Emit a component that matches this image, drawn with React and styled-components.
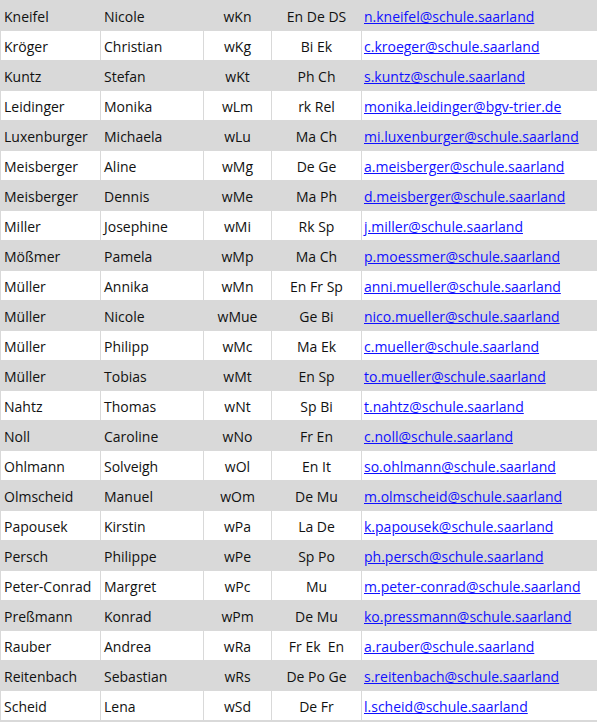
import React from 'react'
import styled, { createGlobalStyle } from 'styled-components'

const teachers = [
  ['Kneifel', 'Nicole', 'wKn', 'En De DS', 'n.kneifel@schule.saarland'],
  ['Kröger', 'Christian', 'wKg', 'Bi Ek', 'c.kroeger@schule.saarland'],
  ['Kuntz', 'Stefan', 'wKt', 'Ph Ch', 's.kuntz@schule.saarland'],
  ['Leidinger', 'Monika', 'wLm', 'rk Rel', 'monika.leidinger@bgv-trier.de'],
  ['Luxenburger', 'Michaela', 'wLu', 'Ma Ch', 'mi.luxenburger@schule.saarland'],
  ['Meisberger', 'Aline', 'wMg', 'De Ge', 'a.meisberger@schule.saarland'],
  ['Meisberger', 'Dennis', 'wMe', 'Ma Ph', 'd.meisberger@schule.saarland'],
  ['Miller', 'Josephine', 'wMi', 'Rk Sp', 'j.miller@schule.saarland'],
  ['Mößmer', 'Pamela', 'wMp', 'Ma Ch', 'p.moessmer@schule.saarland'],
  ['Müller', 'Annika', 'wMn', 'En Fr Sp', 'anni.mueller@schule.saarland'],
  ['Müller', 'Nicole', 'wMue', 'Ge Bi', 'nico.mueller@schule.saarland'],
  ['Müller', 'Philipp', 'wMc', 'Ma Ek', 'c.mueller@schule.saarland'],
  ['Müller', 'Tobias', 'wMt', 'En Sp', 'to.mueller@schule.saarland'],
  ['Nahtz', 'Thomas', 'wNt', 'Sp Bi', 't.nahtz@schule.saarland'],
  ['Noll', 'Caroline', 'wNo', 'Fr En', 'c.noll@schule.saarland'],
  ['Ohlmann', 'Solveigh', 'wOl', 'En It', 'so.ohlmann@schule.saarland'],
  ['Olmscheid', 'Manuel', 'wOm', 'De Mu', 'm.olmscheid@schule.saarland'],
  ['Papousek', 'Kirstin', 'wPa', 'La De', 'k.papousek@schule.saarland'],
  ['Persch', 'Philippe', 'wPe', 'Sp Po', 'ph.persch@schule.saarland'],
  ['Peter-Conrad', 'Margret', 'wPc', 'Mu', 'm.peter-conrad@schule.saarland'],
  ['Preßmann', 'Konrad', 'wPm', 'De Mu', 'ko.pressmann@schule.saarland'],
  ['Rauber', 'Andrea', 'wRa', 'Fr Ek  En', 'a.rauber@schule.saarland'],
  ['Reitenbach', 'Sebastian', 'wRs', 'De Po Ge', 's.reitenbach@schule.saarland'],
  ['Scheid', 'Lena', 'wSd', 'De Fr', 'l.scheid@schule.saarland'],
]

const GlobalStyle = createGlobalStyle`
  html, body {
    margin: 0;
    padding: 0;
    overflow: hidden;
    background: #d9d9d9;
  }
`

const Sheet = styled.table`
  border-collapse: separate;
  border-spacing: 1px;
  margin: -1px 0 0 -1px;
  padding: 1px 0 0 1px;
  background: #d9d9d9;
  table-layout: fixed;
  width: 610px;
  font-family: 'Open Sans', 'Liberation Sans', sans-serif;
  font-size: 14px;
  color: #111;
`

const Row = styled.tr`
  background: ${p => (p.$shaded ? '#d9d9d9' : '#ffffff')};
`

const Cell = styled.td`
  height: 29px;
  padding: 2px 0 0 ${p => (p.$center ? '0' : p.$tight ? '2px' : '3px')};
  box-sizing: border-box;
  text-align: ${p => (p.$center ? 'center' : 'left')};
  white-space: pre;
  overflow: hidden;
  vertical-align: middle;
`

const Mail = styled.a`
  color: #1010ff;
  text-decoration: underline;
`

export default function App() {
  return (
    <>
      <GlobalStyle />
      <Sheet>
        <colgroup>
          <col style={{ width: 99 }} />
          <col style={{ width: 102 }} />
          <col style={{ width: 67 }} />
          <col style={{ width: 89 }} />
          <col />
        </colgroup>
        <tbody>
          {teachers.map(([last, first, short, subjects, mail], i) => (
            <Row key={i} $shaded={i % 2 === 0}>
              <Cell>{last}</Cell>
              <Cell>{first}</Cell>
              <Cell $center>{short}</Cell>
              <Cell $center>{subjects}</Cell>
              <Cell $tight>
                <Mail href={`mailto:${mail}`}>{mail}</Mail>
              </Cell>
            </Row>
          ))}
        </tbody>
      </Sheet>
    </>
  )
}
